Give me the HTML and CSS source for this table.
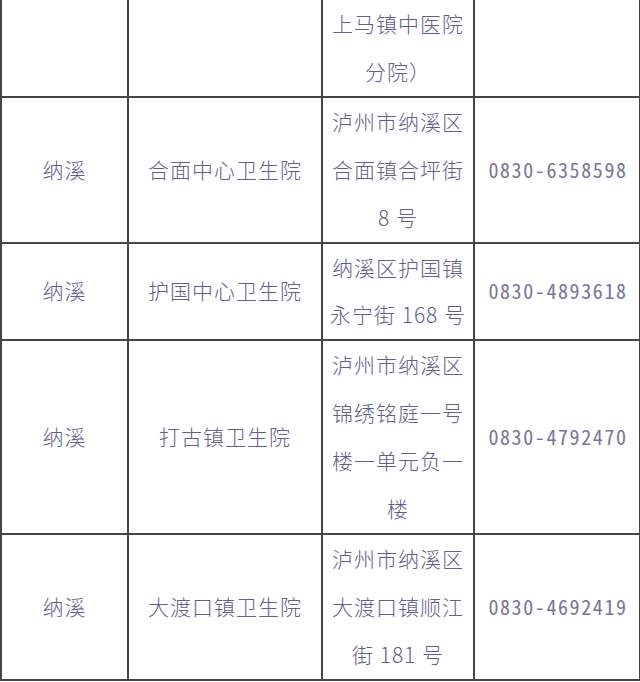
FILE: index.html
```html
<!DOCTYPE html>
<html lang="zh-CN">
<head>
<meta charset="utf-8">
<title>纳溪 卫生院</title>
<link rel="stylesheet" href="styles.css">
</head>
<body>
<table class="sheet">
  <colgroup>
    <col class="c-area">
    <col class="c-name">
    <col class="c-addr">
    <col class="c-tel">
  </colgroup>
  <tbody>
    <tr class="first">
      <td></td>
      <td></td>
      <td class="addr">上马镇中医院分院）</td>
      <td></td>
    </tr>
    <tr>
      <td>纳溪</td>
      <td>合面中心卫生院</td>
      <td class="addr">泸州市纳溪区合面镇合坪街8&nbsp;号</td>
      <td class="tel">0830-6358598</td>
    </tr>
    <tr>
      <td>纳溪</td>
      <td>护国中心卫生院</td>
      <td class="addr">纳溪区护国镇永宁街 168 号</td>
      <td class="tel">0830-4893618</td>
    </tr>
    <tr>
      <td>纳溪</td>
      <td>打古镇卫生院</td>
      <td class="addr">泸州市纳溪区锦绣铭庭一号楼一单元负一楼</td>
      <td class="tel">0830-4792470</td>
    </tr>
    <tr>
      <td>纳溪</td>
      <td>大渡口镇卫生院</td>
      <td class="addr">泸州市纳溪区大渡口镇顺江街 181 号</td>
      <td class="tel">0830-4692419</td>
    </tr>
  </tbody>
</table>
</body>
</html>
```

FILE: styles.css
```css
html, body {
  margin: 0;
  padding: 0;
  background: #ffffff;
}

.sheet {
  width: 639px;
  border-collapse: collapse;
  table-layout: fixed;
  font-family: "Noto Sans CJK SC", "Noto Sans", sans-serif;
  font-size: 21px;
  font-weight: 300;
  letter-spacing: 1px;
  color: #645e8a;
}

.c-area { width: 127px; }
.c-name { width: 194px; }
.c-addr { width: 152px; }
.c-tel  { width: 166px; }

.sheet td {
  border: 2px solid #454545;
  padding: 0 4px;
  line-height: 47.9px;
  text-align: center;
  vertical-align: middle;
}

.sheet tr.first td {
  border-top: none;
}

.sheet td.addr {
  padding: 0 5px;
}

.sheet td.tel {
  font-family: "Noto Sans Mono CJK SC", "Noto Sans CJK SC", monospace;
  font-size: 20px;
  font-weight: 300;
  letter-spacing: 1.6px;
  padding-left: 6px;
  color: #7a7598;
}
```
